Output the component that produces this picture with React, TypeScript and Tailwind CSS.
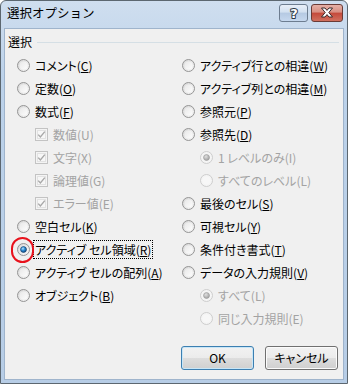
import React from 'react'

const font = "font-['Noto_Sans_CJK_JP','Noto_Sans_CJK_SC',sans-serif] [font-feature-settings:'palt']"

function Radio({ checked, disabled }: { checked?: boolean; disabled?: boolean }) {
  return (
    <svg width="13" height="13" viewBox="0 0 13 13" className="shrink-0">
      <defs>
        <linearGradient id="rOuter" x1="0" y1="0" x2="1" y2="1">
          <stop offset="0" stopColor="#d6d6d6" />
          <stop offset="1" stopColor="#f8f8f8" />
        </linearGradient>
        <linearGradient id="rInner" x1="0" y1="0" x2="1" y2="1">
          <stop offset="0" stopColor="#e8e8e8" />
          <stop offset="1" stopColor="#fdfdfd" />
        </linearGradient>
        <radialGradient id="rDot" cx="0.4" cy="0.35" r="0.7">
          <stop offset="0" stopColor="#b8e2fb" />
          <stop offset="0.45" stopColor="#2f8fd6" />
          <stop offset="1" stopColor="#0a3f78" />
        </radialGradient>
        <radialGradient id="rDotGray" cx="0.4" cy="0.35" r="0.7">
          <stop offset="0" stopColor="#e0e0e0" />
          <stop offset="1" stopColor="#9a9a9a" />
        </radialGradient>
      </defs>
      <circle cx="6.5" cy="6.5" r="6" fill={disabled ? '#f4f4f4' : 'url(#rOuter)'} stroke={disabled ? '#cdcdcd' : '#959595'} />
      <circle cx="6.5" cy="6.5" r="4" fill={disabled ? '#f7f7f7' : 'url(#rInner)'} />
      {checked && <circle cx="6.5" cy="6.5" r="3" fill={disabled ? 'url(#rDotGray)' : 'url(#rDot)'} stroke={disabled ? '#9c9c9c' : '#123a63'} strokeWidth="0.6" />}
    </svg>
  )
}

function Check() {
  return (
    <svg width="13" height="13" viewBox="0 0 13 13" className="shrink-0">
      <rect x="0.5" y="0.5" width="12" height="12" fill="#f4f4f4" stroke="#c3c3c3" />
      <rect x="2.5" y="2.5" width="8" height="8" fill="#f7f7f7" stroke="#e2e2e2" />
      <path d="M3.2 6.6 L5.4 9 L9.8 3.6" fill="none" stroke="#a8a8a8" strokeWidth="1.4" />
    </svg>
  )
}

function Opt({ label, k, checked, disabled, indent }: { label: string; k?: string; checked?: boolean; disabled?: boolean; indent?: boolean }) {
  return (
    <div className={`h-[23px] flex items-center gap-[5px] ${indent ? 'pl-[18px]' : ''}`}>
      <Radio checked={checked} disabled={disabled} />
      <span className={`leading-[16px] whitespace-nowrap ${disabled ? 'text-[#a3a3a3]' : 'text-black'}`}>
        {label}
        {k ? <>(<u>{k}</u>)</> : null}
      </span>
    </div>
  )
}

function CheckRow({ label }: { label: string }) {
  return (
    <div className="h-[23px] flex items-center gap-[5px] pl-[18px]">
      <Check />
      <span className="leading-[16px] whitespace-nowrap text-[#a3a3a3]">{label}</span>
    </div>
  )
}

export default function App() {
  return (
    <div className="w-[348px] h-[384px] flex flex-col rounded-t-[6px] border border-[#5c6770] bg-[linear-gradient(180deg,#cfdeef_0%,#bcd2ea_20%,#b7cde6_100%)] overflow-hidden">
      {/* title bar */}
      <div className="h-[26px] flex items-center justify-between pl-[6px] pr-[4px]">
        <span className="font-['Noto_Sans_CJK_JP',sans-serif] text-[12.5px] text-black leading-none mt-[-2px]">選択オプション</span>
        <div className="flex gap-[3px] mt-[-3px]">
          <div className="w-[29px] h-[18px] rounded-[3px] border border-[#6d7d90] bg-[linear-gradient(180deg,#e8eff8_0%,#d2e0f0_45%,#b5c9e2_50%,#c6d8ee_100%)] flex items-center justify-center">
            <svg width="12" height="14" viewBox="0 0 12 14">
              <text x="6" y="12" textAnchor="middle" fontFamily="DejaVu Sans, sans-serif" fontWeight="bold" fontSize="13" fill="#ffffff" stroke="#2f3a48" strokeWidth="2" paintOrder="stroke" strokeLinejoin="round">?</text>
            </svg>
          </div>
          <div className="w-[32px] h-[18px] rounded-[3px] border border-[#6a3b36] bg-[linear-gradient(180deg,#e6b0a6_0%,#d88f82_45%,#c4493b_50%,#d0705f_100%)] flex items-center justify-center">
            <svg width="14" height="11" viewBox="0 0 14 11">
              <path d="M1.5 1 H5 L7 3.4 L9 1 H12.5 L8.8 5.5 L12.5 10 H9 L7 7.6 L5 10 H1.5 L5.2 5.5 Z" fill="#ffffff" stroke="#3b2b2b" strokeWidth="1" strokeLinejoin="round" />
            </svg>
          </div>
        </div>
      </div>

      {/* client area */}
      <div className={`relative flex-1 mx-[3px] mb-[3px] mt-[1px] bg-[#f0f0f0] border border-[#9fb4cc] text-[12px] ${font}`}>
        <div className="flex items-center pl-[3px] pr-[4px] pt-[5px]">
          <span className="leading-[16px] text-black">選択</span>
          <div className="flex-1 ml-[5px] h-px bg-[#d5dfe5]" />
        </div>

        <div className="flex pl-[12px] mt-[4px]">
          <div className="w-[165px] flex flex-col">
            <Opt label="コメント" k="C" />
            <Opt label="定数" k="O" />
            <Opt label="数式" k="F" />
            <CheckRow label="数値(U)" />
            <CheckRow label="文字(X)" />
            <CheckRow label="論理値(G)" />
            <CheckRow label="エラー値(E)" />
            <Opt label="空白セル" k="K" />
            <div className="relative h-[23px] flex items-center gap-[5px]">
              <Radio checked />
              <span className="ml-[-2px] pl-[1px] pr-[1px] h-[19px] flex items-center border border-dotted border-black leading-[16px] whitespace-nowrap text-black">
                アクティブ セル領域(<u>R</u>)
              </span>
              <div className="absolute left-[-6px] top-[-1px] w-[23px] h-[26px] rounded-full border-2 border-[#e8121c]" />
            </div>
            <Opt label="アクティブ セルの配列" k="A" />
            <Opt label="オブジェクト" k="B" />
          </div>
          <div className="flex flex-col">
            <Opt label="アクティブ行との相違" k="W" />
            <Opt label="アクティブ列との相違" k="M" />
            <Opt label="参照元" k="P" />
            <Opt label="参照先" k="D" />
            <Opt label="1 レベルのみ(I)" checked disabled indent />
            <Opt label="すべてのレベル(L)" disabled indent />
            <Opt label="最後のセル" k="S" />
            <Opt label="可視セル" k="Y" />
            <Opt label="条件付き書式" k="T" />
            <Opt label="データの入力規則" k="V" />
            <Opt label="すべて(L)" checked disabled indent />
            <Opt label="同じ入力規則(E)" disabled indent />
          </div>
        </div>

        <div className="flex justify-end gap-[11px] pr-[5px] mt-[16px]">
          <button className="w-[73px] h-[24px] rounded-[3px] border border-[#3c7fb1] bg-[linear-gradient(180deg,#f2f2f2_0%,#ebebeb_50%,#dddddd_51%,#cfcfcf_100%)] shadow-[inset_0_0_0_1px_#c8e6f7] text-black leading-none">
            OK
          </button>
          <button className="w-[73px] h-[24px] rounded-[3px] border border-[#707070] bg-[linear-gradient(180deg,#f2f2f2_0%,#ebebeb_50%,#dddddd_51%,#cfcfcf_100%)] shadow-[inset_0_0_0_1px_#fbfbfb] text-black leading-none">
            キャンセル
          </button>
        </div>
      </div>
    </div>
  )
}
